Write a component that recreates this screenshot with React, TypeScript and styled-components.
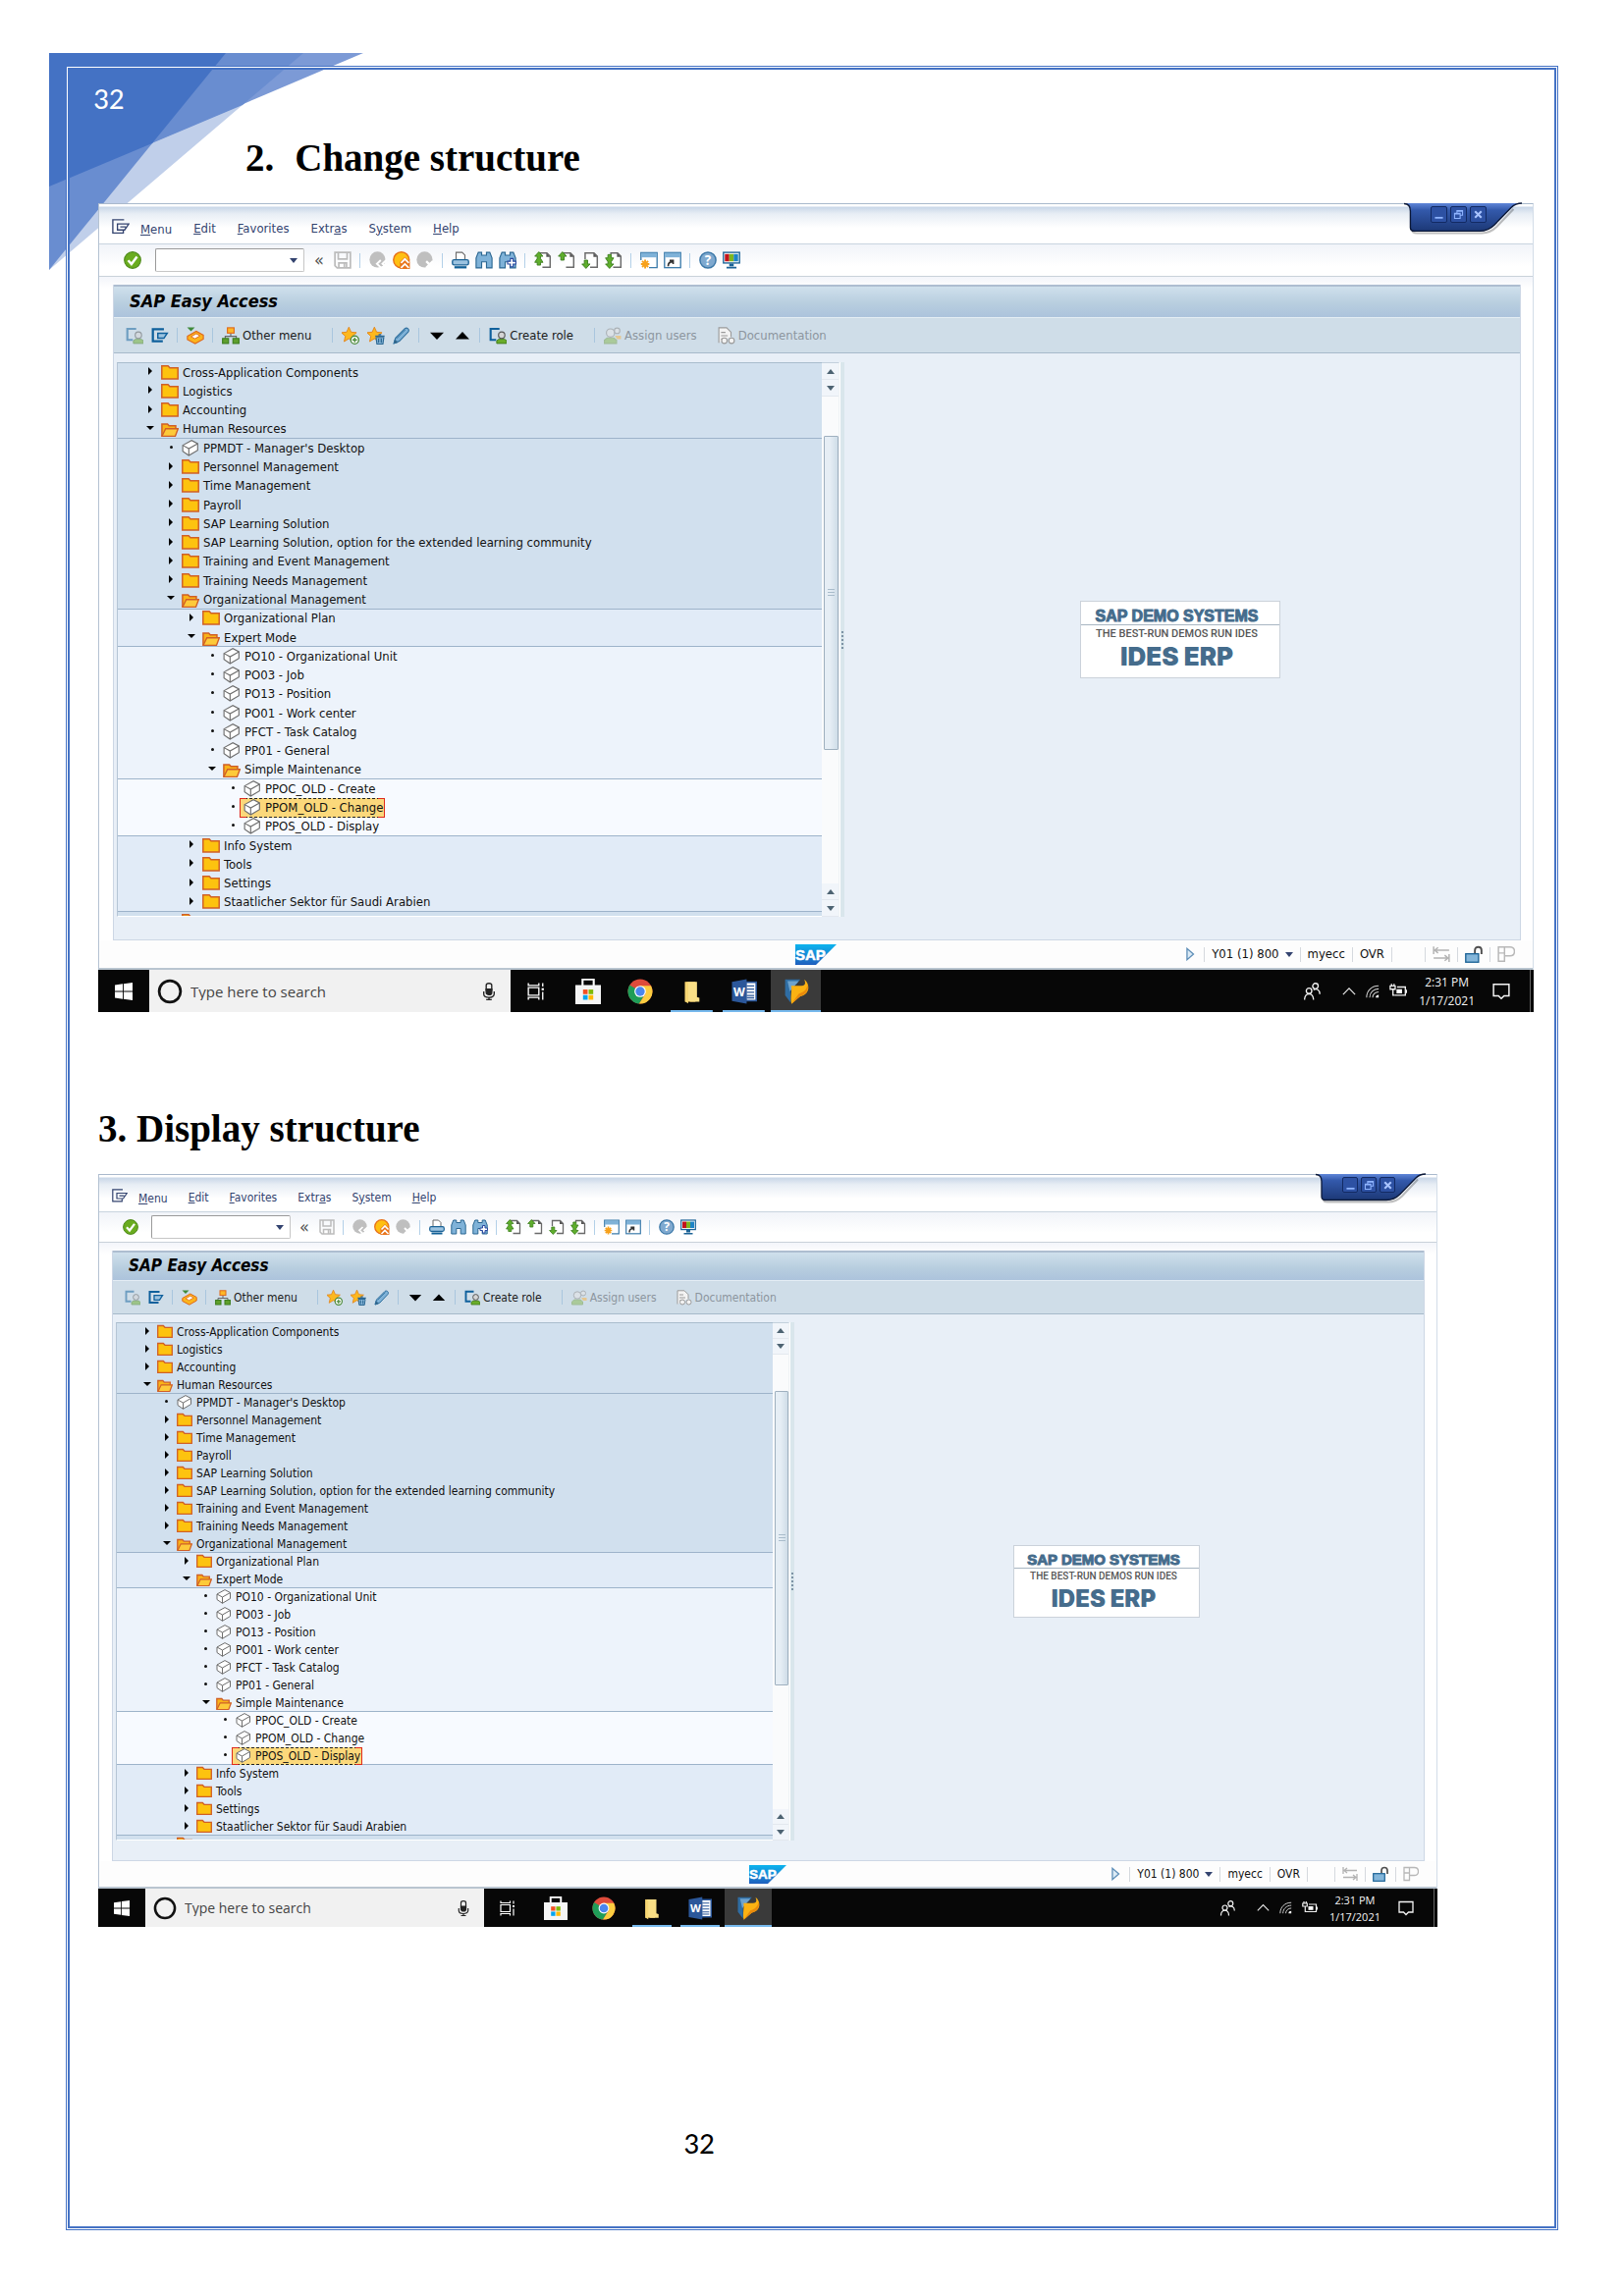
import React, { useId } from 'react';
import styled, { createGlobalStyle, css, ThemeProvider } from 'styled-components';

/* ------------------------------------------------------------------ */
/* Metrics: the same window is shown at two zoom levels                */
/* ------------------------------------------------------------------ */

interface Metrics {
  font: number;
  titleFont: number;
  taskFont: number;
  clockFont: number;
  icon: number;
  menuHeight: number;
  menuPad: number;
  menuGap: number;
  barHeight: number;
  barPad: number;
  titleHeight: number;
  appBarHeight: number;
  commandWidth: number;
  commandGap: number;
  sepWidth: number;
  buttonPad: number;
  bodySide: number;
  bodyPad: number;
  bodyEnd: number;
  treeRows: number;
  treeInset: number;
  indent: number;
  toggle: number;
  treeWidth: number;
  scroll: number;
  scrollButton: number;
  thumbTop: number;
  thumb: number;
  logoWidth: number;
  logoHeight: number;
  logoPad: number;
  logoHead: number;
  logoLine: number;
  logoName: number;
  statusHeight: number;
  statusGap: number;
  sapLogo: number;
  taskHeight: number;
  start: number;
  search: number;
  task: number;
  taskGap: number;
  taskIcon: number;
  tab: number;
  tabHeight: number;
  tabButton: number;
  edge: number;
}

declare module 'styled-components' {
  export interface DefaultTheme extends Metrics {}
}

const large: Metrics = {
  font: 13,
  titleFont: 18,
  taskFont: 15,
  clockFont: 12,
  icon: 18,
  menuHeight: 41,
  menuPad: 9,
  menuGap: 22,
  barHeight: 33,
  barPad: 25,
  titleHeight: 34,
  appBarHeight: 36,
  commandWidth: 152,
  commandGap: 8,
  sepWidth: 6,
  buttonPad: 13,
  bodySide: 14,
  bodyPad: 9,
  bodyEnd: 23,
  treeRows: 559,
  treeInset: 26,
  indent: 21,
  toggle: 14,
  treeWidth: 718,
  scroll: 18,
  scrollButton: 17,
  thumbTop: 40,
  thumb: 320,
  logoWidth: 204,
  logoHeight: 79,
  logoPad: 6,
  logoHead: 16,
  logoLine: 11,
  logoName: 26,
  statusHeight: 30,
  statusGap: 26,
  sapLogo: 42,
  taskHeight: 43,
  start: 52,
  search: 368,
  task: 51,
  taskGap: 2,
  taskIcon: 26,
  tab: 120,
  tabHeight: 30,
  tabButton: 17,
  edge: 14,
};

const regular: Metrics = {
  font: 12,
  titleFont: 17,
  taskFont: 14,
  clockFont: 11,
  icon: 16,
  menuHeight: 38,
  menuPad: 8,
  menuGap: 21,
  barHeight: 31,
  barPad: 24,
  titleHeight: 31,
  appBarHeight: 34,
  commandWidth: 142,
  commandGap: 7,
  sepWidth: 6,
  buttonPad: 12,
  bodySide: 13,
  bodyPad: 8,
  bodyEnd: 20,
  treeRows: 522,
  treeInset: 24,
  indent: 20,
  toggle: 13,
  treeWidth: 669,
  scroll: 17,
  scrollButton: 16,
  thumbTop: 37,
  thumb: 300,
  logoWidth: 190,
  logoHeight: 74,
  logoPad: 5,
  logoHead: 15,
  logoLine: 10,
  logoName: 24,
  statusHeight: 28,
  statusGap: 20,
  sapLogo: 38,
  taskHeight: 39,
  start: 48,
  search: 345,
  task: 48,
  taskGap: 1,
  taskIcon: 24,
  tab: 112,
  tabHeight: 28,
  tabButton: 16,
  edge: 13,
};

/* ------------------------------------------------------------------ */
/* Icons                                                               */
/* ------------------------------------------------------------------ */

const Svg = styled.svg<{ $size?: number }>`
  display: block;
  flex: none;
  width: ${(p) => p.$size ?? p.theme.icon}px;
  height: ${(p) => p.$size ?? p.theme.icon}px;
`;

const star = 'M6.5 .2l2 4.500 4.900.5-3.700 3.200 1.100 4.900-4.300-2.600-4.300 2.600 1.100-4.900L-.3 5.200l4.800-.5z';
const binoculars = 'M.8 15V6l2-5h3v2.500h4.400V1h3l2 5v9h-5V9.500H5.800V15z';
const page = 'M5.500 3V1.500h6l3 3v10h-7';

const icons = {
  exit: (
    <g fill="none" stroke="#33436f" strokeWidth="1.200">
      <path d="M11 .8H.8v12h9.500v-2.500" />
      <path d="M5 4.500h10.300l-3.800 5.500H5zM7.500 7.200h5" />
    </g>
  ),
  exitBlue: (
    <g fill="none" stroke="#0f609c" strokeWidth="2">
      <path d="M11.500 2H1.500v11h9" />
      <path d="M6 5.700h8.500l-3 4.600H6z" fill="#9cc3e0" strokeWidth="1.300" />
    </g>
  ),
  check: (
    <g>
      <circle cx="8" cy="8" r="7.400" fill="#6aac1f" stroke="#4f8a1c" />
      <path d="M4 8.200l3 3.300 5-6.700" fill="none" stroke="#fff" strokeWidth="2.200" />
    </g>
  ),
  save: (
    <g fill="none" stroke="#bcbcbc" strokeWidth="1.500">
      <path d="M1 1h14v14H3l-2-2z" />
      <path d="M4 1v6h8V1M4.500 15v-4.500h7V15M9.500 11v4" />
    </g>
  ),
  back: (
    <g>
      <circle cx="7.500" cy="7.500" r="7.200" fill="#bfbfbf" />
      <path d="M10.500 8L7 11.300l3.500 3.300M15.500 8L12 11.300l3.500 3.300" fill="none" stroke="#fff" strokeWidth="1.700" />
    </g>
  ),
  up: (
    <g>
      <circle cx="7.800" cy="7.800" r="7.100" fill="#ffc012" stroke="#e8731a" strokeWidth="1.300" />
      <path d="M6.500 9.500L11 5l4.500 4.500V16h-9z" fill="#e8731a" />
      <path d="M7.500 10.500L11 7l3.500 3.500M7.500 15L11 11.500l3.500 3.500" fill="none" stroke="#fff" strokeWidth="1.600" />
    </g>
  ),
  cancel: (
    <g>
      <circle cx="7.500" cy="7.500" r="7.200" fill="#bfbfbf" />
      <path d="M9 9l6 6M15 9l-6 6" stroke="#fff" strokeWidth="2" />
    </g>
  ),
  print: (
    <g>
      <path d="M4 8V1h5.500l2.500 2.500V8" fill="#fff" stroke="#6b6b6b" />
      <rect x=".7" y="7.700" width="14.600" height="4.600" rx="1.500" fill="#9cc3e0" stroke="#1c6396" strokeWidth="1.200" />
      <rect x="2.500" y="13.500" width="11" height="2" fill="#0f5f96" />
    </g>
  ),
  find: <path d={binoculars} fill="#7fb2d8" stroke="#2b6792" />,
  findNext: (
    <g>
      <path d={binoculars} fill="#7fb2d8" stroke="#2b6792" />
      <path d="M10.500 6.500h2.500v2.500h2.500v2.500H13V14h-2.500v-2.500H8V9h2.500z" fill="#fff" stroke="#2a49a0" />
    </g>
  ),
  firstPage: (
    <g>
      <path d={page} fill="#fff" stroke="#6a6a6a" strokeWidth="1.300" />
      <path d="M11 1.500v3.500h3.500z" fill="#555" />
      <path d="M4.300.5L8 4.500H5.800v2L8 10H5.800v2.500h-3V10H.6l2.200-3.500v-2H.6z" fill="#5fae2c" stroke="#3b7d1d" strokeWidth=".800" />
    </g>
  ),
  prevPage: (
    <g>
      <path d={page} fill="#fff" stroke="#6a6a6a" strokeWidth="1.300" />
      <path d="M11 1.500v3.500h3.500z" fill="#555" />
      <path d="M4.300.5L8 4.500H5.800V8H2.800V4.500H.6z" fill="#5fae2c" stroke="#3b7d1d" strokeWidth=".800" />
    </g>
  ),
  nextPage: (
    <g>
      <path d="M3.500 7V1.500h8l3 3v10H8" fill="#fff" stroke="#6a6a6a" strokeWidth="1.300" />
      <path d="M11 1.500v3.500h3.500z" fill="#555" />
      <path d="M4.300 15.500L8 11.500H5.800V8H2.800v3.500H.6z" fill="#5fae2c" stroke="#3b7d1d" strokeWidth=".800" />
    </g>
  ),
  lastPage: (
    <g>
      <path d={page} fill="#fff" stroke="#6a6a6a" strokeWidth="1.300" />
      <path d="M11 1.500v3.500h3.500z" fill="#555" />
      <path d="M4.300 15.500L8 11.500H5.800v-2L8 6H5.800V3h-3v3H.6l2.200 3.500v2H.6z" fill="#5fae2c" stroke="#3b7d1d" strokeWidth=".800" />
    </g>
  ),
  newSession: (
    <g>
      <path d="M.7 8V1.200h14.600v13.600H8" fill="#fff" stroke="#3d7cab" strokeWidth="1.200" />
      <rect x="1" y="1.500" width="14" height="4" fill="#7fb2d8" />
      <path d="M4.500 7.500v8M.7 11.500h7.600M1.800 8.800l5.400 5.400M7.200 8.800l-5.400 5.400" stroke="#f7a11b" strokeWidth="1.700" />
    </g>
  ),
  shortcut: (
    <g>
      <rect x=".7" y="1.200" width="14.600" height="13.600" fill="#fff" stroke="#3d7cab" strokeWidth="1.200" />
      <rect x="1" y="1.500" width="14" height="4" fill="#7fb2d8" />
      <path d="M4 13.500c0-3 1.500-4 4-4M5.300 8.200h3.200v3.300" fill="none" stroke="#333" strokeWidth="1.500" />
    </g>
  ),
  help: (
    <g>
      <circle cx="8" cy="8" r="7.200" fill="#7fa9cf" stroke="#3c78a8" strokeWidth="1.300" />
      <text x="8" y="12.200" textAnchor="middle" fontSize="12" fontWeight="700" fill="#fff" fontFamily="Open Sans, sans-serif">?</text>
    </g>
  ),
  layout: (
    <g>
      <rect x=".7" y="1" width="14.600" height="9.600" fill="#fff" stroke="#1c6396" strokeWidth="1.200" />
      <path d="M2 2.500h4v6.600H2z" fill="#c4131b" />
      <path d="M6 2.500h4v6.600H6z" fill="#7fb51f" />
      <path d="M10 2.500h4v6.600h-4z" fill="#1d84c6" />
      <path d="M6 11h4v2.500H6zM3.500 14h9v1.500h-9z" fill="#1c6396" />
    </g>
  ),
  role: (
    <g>
      <path d="M9.500 1.800H1.500v10h5" fill="none" stroke="#0f609c" strokeWidth="1.900" />
      <path d="M7 15v-2.500l2-1.500h5l2 1.500V15z" fill="#6aac2a" stroke="#3f7a1e" strokeWidth=".800" />
      <circle cx="11.500" cy="7.500" r="2.900" fill="#d5d5d5" stroke="#555" />
    </g>
  ),
  userMenu: (
    <g>
      <path d="M.5.500h7L4 4z" fill="#3f8a3a" />
      <path d="M.8 8.500l8-4.500 6.400 3.500v3.500l-7.400 4.200-7-3.700z" fill="#fbb51c" stroke="#e0691a" />
      <path d="M4 8.800l4.800-2.600 3.400 1.900-4.600 2.600z" fill="#fff" stroke="#e0691a" strokeWidth=".800" />
    </g>
  ),
  hierarchy: (
    <g>
      <path d="M8 6v3M3 11V8.500h10V11" fill="none" stroke="#666" />
      <rect x="5" y=".8" width="6" height="4.800" fill="#fdb827" stroke="#e0691a" />
      <rect x=".6" y="10.500" width="5.400" height="4.500" fill="#5f9f2d" stroke="#3b7d1d" />
      <rect x="10" y="10.500" width="5.400" height="4.500" fill="#5f9f2d" stroke="#3b7d1d" />
    </g>
  ),
  starAdd: (
    <g>
      <path d={star} fill="#fdb81e" stroke="#e2831b" strokeWidth=".800" />
      <circle cx="11.800" cy="11.800" r="3.600" fill="#fff" stroke="#4b8a3b" strokeWidth="1.200" />
      <path d="M11.800 9.700v4.200M9.700 11.800h4.200" stroke="#4b8a3b" strokeWidth="1.200" />
    </g>
  ),
  starDelete: (
    <g>
      <path d={star} fill="#fdb81e" stroke="#e2831b" strokeWidth=".800" />
      <path d="M8 9.500h7l-.8 6H8.800z" fill="#8fbcdd" stroke="#2b6792" />
      <path d="M7.300 8.300h8.400M10.300 7h2.400M10.300 10.500v4M12.700 10.500v4" stroke="#2b6792" strokeWidth="1.200" />
    </g>
  ),
  pencil: (
    <g>
      <path d="M1 15l1.500-5L11 1.500c2-1.500 4.500 1 3 3L6 13z" fill="#7fb2d8" stroke="#2f6f9d" />
      <path d="M3.500 10.500l8-8M1 15l1-3.500L4.500 14z" stroke="#2f6f9d" strokeWidth=".800" fill="#35607f" />
    </g>
  ),
  down: <path d="M1.800 5h12.400L8 11.500z" fill="#000" />,
  upArrow: <path d="M1.800 11h12.400L8 4.500z" fill="#000" />,
  users: (
    <g opacity=".55">
      <path d="M.5 15v-3l2.500-2h6l2.500 2v3z" fill="#8dbb5c" stroke="#7da35a" />
      <circle cx="6" cy="5.500" r="3.700" fill="#e6e6e6" stroke="#8e8e8e" />
      <circle cx="12" cy="3.500" r="2.500" fill="#e6e6e6" stroke="#8e8e8e" />
      <path d="M10 8h5.500v3H12z" fill="#f7b64a" />
    </g>
  ),
  document: (
    <g fill="#f3f3f3" stroke="#9a9a9a">
      <path d="M1 14.500V.8h7l4 4V9" />
      <path d="M3 5h4M3 8h6M3 11h2" />
      <circle cx="6" cy="12.500" r="2.500" />
      <circle cx="12.500" cy="12.500" r="2.500" />
    </g>
  ),
  folder: <path d="M.7 13.300V1.500h5.600l1.700 1.800h7.300v10z" fill="#fdc30f" stroke="#d05f27" strokeWidth="1.300" />,
  folderOpen: (
    <g>
      <path d="M.8 14.500V3.500h5l1.500 1.700h6v3" fill="#f9b318" stroke="#d05f27" strokeWidth="1.300" />
      <path d="M.9 14.500l3.300-6.700h11.200l-2.500 6.700z" fill="#fdca3a" stroke="#d05f27" strokeWidth="1.200" />
    </g>
  ),
  transaction: (
    <g fill="#fff" stroke="#6d6d6d" strokeWidth="1">
      <path d="M1 5L9 .6l5.500 2.900V9.500L6.500 14.300 1 10.500z" />
      <path d="M1 5l5.500 3 8-4.500M6.500 8v6.300" fill="none" />
    </g>
  ),
  send: <path d="M4.500 1.500v13L12 8z" fill="#dcebf6" stroke="#5f8fb8" strokeWidth="1.500" />,
  tabs: (
    <g fill="none" stroke="#b3b3b3" strokeWidth="1.300">
      <path d="M1 1v7M1.500 4.500H15M5 2L2 4.500 5 7M15 8v7M1 11.500h13.500M11 9l3 2.500-3 2.500" />
    </g>
  ),
  lock: (
    <g>
      <path d="M9 7.500V4.500c0-4 6-4 6 0V8" fill="none" stroke="#4f4f4f" strokeWidth="1.700" />
      <rect x=".7" y="7.700" width="11.600" height="7.600" fill="#84b6da" stroke="#1c6396" strokeWidth="1.200" />
    </g>
  ),
  performance: (
    <path d="M1 1.500h10.500q4 0 4 4t-4 4H6.500v5H1zM1 7h5.500V1.500M6.500 7v2.500" fill="none" stroke="#b8b8b8" strokeWidth="1.300" />
  ),
  windows: (
    <path d="M0 2.200l7.200-1v6.400H0zM8 1.100L16 0v7.600H8zM0 8.400h7.200v6.400L0 13.800zM8 8.400h8V16l-8-1.100z" fill="#fff" />
  ),
  cortana: <circle cx="8" cy="8" r="6.700" fill="none" stroke="#111" strokeWidth="1.700" />,
  mic: (
    <g fill="none" stroke="#222" strokeWidth="1.200">
      <path d="M5.500 7.500V2.500c0-2.400 5-2.400 5 0v5" />
      <path d="M5.500 6h5v3c0 2.600-5 2.600-5 0z" fill="#222" />
      <path d="M3.300 8v2.500c0 4 9.400 4 9.400 0V8M8 13.500v2M5.500 15.500h5" />
    </g>
  ),
  taskView: (
    <g fill="none" stroke="#fff" strokeWidth="1.200">
      <path d="M1 4.500h9.500v7H1zM1 .5v2h9.500v-2M1 15.500v-2h9.500v2M14 .5v3M14 8.500v7" />
      <path d="M13 5h2v2h-2z" fill="#fff" stroke="none" />
    </g>
  ),
  store: (
    <g>
      <path d="M4.500 4.500v-4h7v4" fill="none" stroke="#fff" strokeWidth="1.300" />
      <path d="M0 4h16v12H0z" fill="#f5f5f5" />
      <path d="M4.800 6.800h2.900v2.900H4.800z" fill="#f25022" />
      <path d="M8.300 6.800h2.900v2.900H8.300z" fill="#7fba00" />
      <path d="M4.800 10.300h2.900v2.900H4.800z" fill="#00a4ef" />
      <path d="M8.300 10.300h2.900v2.900H8.300z" fill="#ffb900" />
    </g>
  ),
  chrome: (
    <g>
      <circle cx="8" cy="8" r="7.700" fill="#de4b3b" />
      <path d="M1.400 4a7.700 7.700 0 0 0 6 11.700l3.500-6z" fill="#1f9d58" />
      <path d="M7.400 15.700A7.700 7.700 0 0 0 14.800 4.500H8l3.300 5z" fill="#fccd40" />
      <circle cx="8" cy="8" r="3.600" fill="#fff" />
      <circle cx="8" cy="8" r="2.900" fill="#4a86ee" />
    </g>
  ),
  explorer: (
    <g>
      <path d="M3.500 2h6.500v12.500H3.500z" fill="#e8b954" />
      <path d="M4.500 2H11v9.500l1.500.5v2.500H7l-2.500-1z" fill="#fadf86" />
      <path d="M3.500 2l2 .8V15.500l-2-1.200z" fill="#f7d774" />
    </g>
  ),
  word: (
    <g>
      <path d="M9 2.200h6.500v11.600H9z" fill="#fff" stroke="#2b579a" />
      <path d="M9.500 4.500h4.700M9.500 6.500h4.700M9.500 8.500h4.700M9.500 10.500h4.700M9.500 12h4.700" stroke="#2b579a" strokeWidth=".800" />
      <path d="M.3 2L9.500.3v15.400L.3 14z" fill="#2b579a" />
      <text x="4.900" y="10.800" textAnchor="middle" fontSize="7.500" fontWeight="700" fill="#fff" fontFamily="Open Sans, sans-serif">W</text>
    </g>
  ),
  sapGui: (
    <g>
      <path d="M1 .5h9.500L8 3.500H4.500V15L1 10.500z" fill="#2f6da3" />
      <path d="M2.500 1.500h7L4 8z" fill="#6ea2cc" />
      <path d="M4.800 4.500h6.500C14 4.500 13.800 2.500 13 .5c4 3 3.500 9.500-2.500 10.500L5 15.800C4 12 5.500 7.500 4.800 4.500z" fill="#fbb212" />
      <path d="M5 15.800l5.500-4.800c4-1 5.200-4 4.700-7.500-.7 3.500-2.700 5-5.700 6z" fill="#e98a0c" />
    </g>
  ),
  people: (
    <g fill="none" stroke="#f2f2f2" strokeWidth="1.200">
      <circle cx="5.500" cy="7.500" r="2.500" />
      <path d="M1.500 15.500c0-7 8-7 8 0" />
      <circle cx="11.300" cy="3.200" r="2.500" />
      <path d="M9.500 6.500c3-1.500 5.800 0 5.800 4" />
    </g>
  ),
  caret: <path d="M1 11.500l7-7 7 7" fill="none" stroke="#e8e8e8" strokeWidth="1.400" />,
  wifi: (
    <g fill="none" stroke="#cfcfcf" strokeWidth="1.200">
      <path d="M1 15C1 7 7 1.500 15 1.500M4.500 15C4.500 9.500 9 5 15 5M8 15c0-3.500 3-6.500 7-6.500" />
      <path d="M11.500 15c0-2 1.500-3 3.500-3v3z" fill="#fff" stroke="none" />
    </g>
  ),
  battery: (
    <g fill="none" stroke="#f0f0f0" strokeWidth="1.200">
      <path d="M7 4h7.500v7.500H5M15.500 6.500v3" />
      <path d="M.8 3h4.500v3H.8zM2 1v2M4.300 1v2M3.300 6v5.500H5" />
      <path d="M6.500 6h5v3.800h-5z" fill="#fff" stroke="none" />
    </g>
  ),
  notice: <path d="M1 1.500h14v10.500h-4.500L8 14.500 5.500 12H1z" fill="none" stroke="#f5f5f5" strokeWidth="1.300" />,
  minimize: <path d="M3 11h10v2.200H3z" fill="#8fb4ff" />,
  restore: (
    <path d="M6 6V3h7v6h-3M3 6.500h7v6.500H3zM3 7.500h7M6 4h7" fill="none" stroke="#8fb4ff" strokeWidth="1.300" />
  ),
  close: <path d="M4 4l8 8M12 4l-8 8" stroke="#a9c4ff" strokeWidth="2.600" />,
};

type IconName = keyof typeof icons;

const Icon = ({ name, size }: { name: IconName; size?: number }) => (
  <Svg viewBox="0 0 16 16" $size={size} aria-hidden="true">
    {icons[name]}
  </Svg>
);

/* ------------------------------------------------------------------ */
/* Page                                                                */
/* ------------------------------------------------------------------ */

const GlobalStyle = createGlobalStyle`
  *, *::before, *::after { box-sizing: border-box; }
  body { margin: 0; background: #fff; }
  button, input { font: inherit; color: inherit; }
`;

const Page = styled.div`
  position: relative;
  display: flex;
  min-height: 100vh;
  padding: 67px;
`;

const CornerArt = styled.svg`
  position: absolute;
  left: 50px;
  top: 54px;
  width: 320px;
  height: 222px;
`;

const Frame = styled.main`
  position: relative;
  flex: 1;
  min-width: 0;
  padding: 15px 24px 60px 32px;
  border: 1px solid #4472c4;
  box-shadow: inset 0 0 0 1px #fff, inset 0 0 0 3px #4472c4;
`;

const pageNumber = css`
  font: 400 31px/34px Carlito, Lato, sans-serif;
`;

const PageHeader = styled.header`
  ${pageNumber}
  margin-left: -5px;
  color: #fff;
`;

const PageFooter = styled.footer`
  ${pageNumber}
  margin-top: 203px;
  padding-right: 238px;
  text-align: center;
  color: #000;
`;

const Heading = styled.h2<{ $numbered?: boolean }>`
  display: flex;
  gap: ${(p) => (p.$numbered ? 21 : 0)}px;
  margin: ${(p) => (p.$numbered ? '21px 0 23px 150px' : '96px 0 23px')};
  font: 700 39px/46px 'Liberation Serif', 'Times New Roman', serif;
  color: #000;
`;

/* ------------------------------------------------------------------ */
/* SAP window                                                          */
/* ------------------------------------------------------------------ */

const Shot = styled.section<{ $inset?: number }>`
  margin-right: ${(p) => p.$inset ?? 0}px;
  font: 400 ${(p) => p.theme.font}px/${(p) => p.theme.icon}px 'DejaVu Sans Condensed', Tahoma, 'Noto Sans', sans-serif;
  color: #111;
  white-space: nowrap;
`;

const Window = styled.div`
  position: relative;
  border-top: 1px solid #a9b9cc;
  border-left: 1px solid #b4c2d2;
  border-right: 1px solid #d3dde8;
  background: #fff;
`;

const PlainButton = styled.button`
  display: flex;
  align-items: center;
  padding: 0;
  border: 0;
  background: none;
  text-align: left;
`;

const MenuBar = styled.nav`
  display: flex;
  align-items: center;
  gap: ${(p) => p.theme.menuGap}px;
  height: ${(p) => p.theme.menuHeight}px;
  padding: ${(p) => p.theme.menuPad}px 13px 0;
  border-bottom: 1px solid #c9d4df;
  background: linear-gradient(#fff 0 2px, #c9d7e8 3px, #e8eef5 10px, #fff 24px);
  color: #33436f;
`;

const MenuItem = styled(PlainButton)`
  display: inline;
`;

const MenuLead = styled(MenuItem)`
  display: flex;
  align-items: flex-end;
  gap: 11px;

  svg {
    margin-bottom: 2px;
  }
`;

const Toolbar = styled.div`
  display: flex;
  align-items: center;
  gap: 6px;
  height: ${(p) => p.theme.barHeight}px;
  padding-left: ${(p) => p.theme.barPad}px;
  border-bottom: 1px solid #c9d1d9;
  background: linear-gradient(#f1f4f9, #fff 70%);
`;

const ToolSep = styled.span`
  width: ${(p) => p.theme.sepWidth}px;
  height: 15px;
  background: linear-gradient(#b3d0e8, #b3d0e8) center / 1px 100% no-repeat;
`;

const Command = styled.div`
  display: flex;
  align-items: center;
  width: ${(p) => p.theme.commandWidth}px;
  height: 24px;
  margin: 0 ${(p) => p.theme.commandGap - 4}px 0 ${(p) => p.theme.commandGap}px;
  padding-right: 6px;
  border: 1px solid #9a9a9a;
  border-right-color: #c6c6c6;
  border-bottom-color: #c6c6c6;
  border-radius: 2px;
  background: #fff;
`;

const CommandInput = styled.input`
  flex: 1;
  min-width: 0;
  height: 20px;
  padding: 0 4px;
  border: 0;
  outline: 0;
  background: none;
`;

const Arrow = styled.span<{ $up?: boolean; $color?: string }>`
  display: block;
  border: solid transparent;
  border-width: ${(p) => (p.$up ? '0 4px 5px' : '5px 4px 0')};
  border-${(p) => (p.$up ? 'bottom' : 'top')}-color: ${(p) => p.$color ?? '#33436f'};
`;

const Collapse = styled(PlainButton)`
  margin-right: 4px;
  color: #555;
  font-size: 18px;
`;

const TabBox = styled.div`
  position: absolute;
  top: -1px;
  right: 11px;
  width: ${(p) => p.theme.tab}px;
  height: ${(p) => p.theme.tabHeight}px;
  padding: 3px 0 0 27px;
`;

const TabShape = styled.svg`
  position: absolute;
  inset: 0;
  width: 100%;
  height: 100%;
  overflow: visible;
`;

const TabButtons = styled.div`
  position: relative;
  display: flex;
  gap: 3px;
`;

const TabButton = styled(PlainButton)`
  justify-content: center;
  width: ${(p) => p.theme.tabButton}px;
  height: ${(p) => p.theme.tabButton}px;
  border: 1px solid #122a63;
  border-radius: 2px;
  background: #2d51a3;
`;

const Body = styled.div`
  padding: 8px 12px 0 ${(p) => p.theme.bodySide}px;
  background: linear-gradient(#f3f5fa, #fff 12px);
`;

const Panel = styled.div`
  border: 1px solid #cdd7e5;
  border-top: 0;
  background: #e8eff7;
`;

const TitleBar = styled.h3`
  height: ${(p) => p.theme.titleHeight}px;
  margin: 0;
  padding: 0 16px;
  border-top: 2px solid #adbdd0;
  border-bottom: 1px solid #e4edf4;
  background: linear-gradient(#cfe0ec, #b8cedf 55%, #acc3dc);
  font: italic 700 ${(p) => p.theme.titleFont}px/${(p) => p.theme.titleHeight - 5}px 'DejaVu Sans Condensed', Tahoma, sans-serif;
  color: #000;
`;

const AppBar = styled.div`
  display: flex;
  align-items: center;
  gap: 8px;
  height: ${(p) => p.theme.appBarHeight}px;
  padding: 0 12px;
  border-bottom: 1px solid #a6b9ca;
  background: #cfdde8;
`;

const AppSep = styled.span`
  width: 2px;
  height: 15px;
  border-left: 1px solid #a9c6de;
`;

const AppButton = styled(PlainButton)<{ $faded?: boolean }>`
  gap: 3px;
  opacity: ${(p) => (p.$faded ? 0.5 : 1)};
`;

const LabelButton = styled(AppButton)`
  padding-right: ${(p) => p.theme.buttonPad}px;
  color: #1a1a1a;

  &:disabled {
    color: #8c959e;
  }
`;

const Split = styled.div`
  display: flex;
  padding: ${(p) => p.theme.bodyPad}px 0 ${(p) => p.theme.bodyEnd}px 3px;
`;

/* ---- tree ---- */

const shades = ['#d1e0ee', '#d1e0ee', '#e1ebf7', '#edf3fb', '#f7faff'];

const TreePane = styled.div`
  width: ${(p) => p.theme.treeWidth}px;
  border-top: 1px solid #a9bccd;
  border-left: 1px solid #b5c5d5;
  border-bottom: 1px solid #fff;
`;

const Tree = styled.ul`
  display: grid;
  grid-auto-rows: 1fr;
  height: ${(p) => p.theme.treeRows}px;
  margin: 0;
  padding: 0;
  list-style: none;
`;

const Row = styled.li<{ $level: number; $line?: boolean }>`
  display: flex;
  align-items: center;
  min-height: 0;
  padding-left: ${(p) => p.theme.treeInset + p.$level * p.theme.indent}px;
  background: ${(p) => shades[p.$level]};
  box-shadow: ${(p) => (p.$line ? 'inset 0 -1px #9db3ca' : 'none')};
`;

const NextRow = styled.div`
  height: 4px;
  padding: 1px 0 0 ${(p) => p.theme.treeInset + p.theme.indent + p.theme.toggle + 4}px;
  overflow: hidden;
  background: #d1e0ee;
`;

const Toggle = styled.span<{ $kind: 'closed' | 'open' | 'leaf' }>`
  display: flex;
  align-items: center;
  justify-content: center;
  width: ${(p) => p.theme.toggle}px;
  height: 100%;
  padding-bottom: 3px;

  &::before {
    content: '';
    ${(p) =>
      p.$kind === 'leaf'
        ? 'width: 3px; height: 3px; border-radius: 2px; background: #111;'
        : p.$kind === 'open'
          ? 'border: solid transparent; border-width: 4px 4px 0; border-top-color: #000;'
          : 'border: solid transparent; border-width: 4px 0 4px 4px; border-left-color: #000;'}
  }
`;

const Node = styled(PlainButton)<{ $selected?: boolean }>`
  position: relative;
  gap: 4px;
  height: 100%;
  padding: 0 1px 0 3px;
  border: 1px solid transparent;

  ${(p) =>
    p.$selected &&
    css`
      border: 1px dashed #222;
      background: #fbd87b;

      &::before,
      &::after {
        content: '';
        position: absolute;
        top: -1px;
        bottom: -1px;
        width: 7px;
        border: 1px solid #e02a1c;
      }
      &::before {
        left: -1px;
        border-right: 0;
      }
      &::after {
        right: -1px;
        border-left: 0;
      }
    `}
`;

const Scroll = styled.div`
  display: flex;
  flex-direction: column;
  width: ${(p) => p.theme.scroll}px;
  border-top: 1px solid #c3d0dc;
  border-right: 1px solid #eef2f5;
  background: #fafbfc;
`;

const ScrollButton = styled(PlainButton)`
  flex: none;
  justify-content: center;
  height: ${(p) => p.theme.scrollButton}px;
  border-bottom: 1px solid #e3e8ee;
  background: #f1f5fa;
`;

const Track = styled.div`
  flex: 1;
  padding: ${(p) => p.theme.thumbTop}px 0 0 2px;
`;

const Thumb = styled.div`
  display: grid;
  place-content: center;
  height: ${(p) => p.theme.thumb}px;
  border: 1px solid #9fb0bf;
  border-radius: 1px;
  background: linear-gradient(90deg, #e6eef5 40%, #cfdde8);
`;

const Grip = styled.span`
  width: 7px;
  height: 9px;
  background: repeating-linear-gradient(#a9bccb 0 1px, transparent 1px 3px);
`;

const Splitter = styled.div`
  display: grid;
  place-content: center;
  width: 5px;
  border-left: 1px solid #fff;
  background: #d9e6ec;
`;

const SplitterGrip = styled(Grip)`
  width: 2px;
  height: 18px;
  background: repeating-linear-gradient(#7d93a5 0 2px, transparent 2px 4px);
`;

const LogoPane = styled.div`
  display: grid;
  flex: 1;
  place-content: center;
  padding-right: 5px;
`;

const LogoCard = styled.div`
  display: flex;
  flex-direction: column;
  align-items: center;
  width: ${(p) => p.theme.logoWidth}px;
  height: ${(p) => p.theme.logoHeight}px;
  border: 1px solid #cbd2da;
  background: #fff;
  color: #456c8c;
`;

const LogoHead = styled.div`
  align-self: stretch;
  padding: ${(p) => p.theme.logoPad}px 6px 0 0;
  border-bottom: 1px solid #a8b6c2;
  font: 700 ${(p) => p.theme.logoHead}px/17px 'Liberation Sans', Arial, sans-serif;
  -webkit-text-stroke: 1px #456c8c;
  text-align: center;
`;

const LogoLine = styled.div`
  padding-right: 6px;
  font: 500 ${(p) => p.theme.logoLine}px/${(p) => p.theme.scrollButton}px Roboto, 'Liberation Sans', sans-serif;
  color: #555;
`;

const LogoName = styled.div`
  padding-right: 6px;
  font: 900 ${(p) => p.theme.logoName}px/30px Inter, 'Liberation Sans', sans-serif;
`;

/* ---- status bar ---- */

const StatusBar = styled.footer`
  display: grid;
  grid-template-columns: 1fr auto 1fr;
  align-items: center;
  height: ${(p) => p.theme.statusHeight}px;
  border-bottom: 2px solid #b9c5d0;
  background: #fdfdfd;
`;

const SapLogo = styled.svg`
  display: block;
  grid-column: 2;
  width: ${(p) => p.theme.sapLogo}px;
`;

const StatusItems = styled.div`
  display: flex;
  align-items: center;
  justify-content: flex-end;
  gap: 7px;
  padding-right: 18px;
`;

const StatusSep = styled.span<{ $wide?: boolean }>`
  width: 1px;
  height: 15px;
  margin-left: ${(p) => (p.$wide ? p.theme.statusGap : 0)}px;
  background: #d5d9de;
`;

const StatusButton = styled(PlainButton)`
  gap: 6px;
`;

/* ---- Windows task bar ---- */

const TaskBar = styled.div`
  display: flex;
  height: ${(p) => p.theme.taskHeight}px;
  background: #070707;
  font-family: 'Open Sans', 'Segoe UI', sans-serif;
  color: #f3f3f3;
`;

const StartButton = styled(PlainButton)`
  justify-content: center;
  width: ${(p) => p.theme.start}px;
`;

const SearchBox = styled.label`
  display: flex;
  align-items: center;
  gap: 8px;
  width: ${(p) => p.theme.search}px;
  padding: 0 13px 0 8px;
  background: #f1f1f1;
  color: #333;
`;

const SearchInput = styled.input`
  flex: 1;
  min-width: 0;
  padding: 0;
  border: 0;
  outline: 0;
  background: none;
  font-size: ${(p) => p.theme.taskFont}px;

  &::placeholder {
    color: #444;
    opacity: 1;
  }
`;

const Tasks = styled.div`
  display: flex;
  flex: 1;
  gap: ${(p) => p.theme.taskGap}px;
`;

const TaskButton = styled(PlainButton)<{ $open?: boolean; $active?: boolean }>`
  justify-content: center;
  width: ${(p) => p.theme.task}px;
  background: ${(p) =>
    p.$open
      ? `linear-gradient(#76b9ed, #76b9ed) bottom / ${p.$active ? 100 : 84}% 2px no-repeat`
      : 'none'};
  background-color: ${(p) => (p.$active ? '#3a3a3a' : 'transparent')};
`;

const Tray = styled.div`
  display: flex;
  align-items: center;
  gap: 10px;
  padding-right: 20px;
  border-right: 1px solid #666;
  margin-right: 3px;
`;

const TrayPeople = styled(PlainButton)`
  margin-right: 12px;
`;

const Clock = styled.time`
  padding: 0 8px 0 2px;
  font-size: ${(p) => p.theme.clockFont}px;
  line-height: ${(p) => p.theme.icon + 1}px;
  text-align: center;
`;

/* ------------------------------------------------------------------ */
/* Data                                                                */
/* ------------------------------------------------------------------ */

interface TreeItem {
  level: number;
  kind: 'closed' | 'open' | 'leaf';
  label: string;
  line?: boolean;
}

const item = (level: number, kind: TreeItem['kind'], label: string, line = false): TreeItem => ({
  level,
  kind,
  label,
  line,
});

const tree: TreeItem[] = [
  item(0, 'closed', 'Cross-Application Components'),
  item(0, 'closed', 'Logistics'),
  item(0, 'closed', 'Accounting'),
  item(0, 'open', 'Human Resources', true),
  item(1, 'leaf', "PPMDT - Manager's Desktop"),
  item(1, 'closed', 'Personnel Management'),
  item(1, 'closed', 'Time Management'),
  item(1, 'closed', 'Payroll'),
  item(1, 'closed', 'SAP Learning Solution'),
  item(1, 'closed', 'SAP Learning Solution, option for the extended learning community'),
  item(1, 'closed', 'Training and Event Management'),
  item(1, 'closed', 'Training Needs Management'),
  item(1, 'open', 'Organizational Management', true),
  item(2, 'closed', 'Organizational Plan'),
  item(2, 'open', 'Expert Mode', true),
  item(3, 'leaf', 'PO10 - Organizational Unit'),
  item(3, 'leaf', 'PO03 - Job'),
  item(3, 'leaf', 'PO13 - Position'),
  item(3, 'leaf', 'PO01 - Work center'),
  item(3, 'leaf', 'PFCT - Task Catalog'),
  item(3, 'leaf', 'PP01 - General'),
  item(3, 'open', 'Simple Maintenance', true),
  item(4, 'leaf', 'PPOC_OLD - Create'),
  item(4, 'leaf', 'PPOM_OLD - Change'),
  item(4, 'leaf', 'PPOS_OLD - Display', true),
  item(2, 'closed', 'Info System'),
  item(2, 'closed', 'Tools'),
  item(2, 'closed', 'Settings'),
  item(2, 'closed', 'Staatlicher Sektor für Saudi Arabien', true),
];

const nodeIcon: Record<TreeItem['kind'], IconName> = {
  closed: 'folder',
  open: 'folderOpen',
  leaf: 'transaction',
};

const toolGroups: { icon: IconName; label: string }[][] = [
  [{ icon: 'save', label: 'Save' }],
  [
    { icon: 'back', label: 'Back' },
    { icon: 'up', label: 'Exit' },
    { icon: 'cancel', label: 'Cancel' },
  ],
  [
    { icon: 'print', label: 'Print' },
    { icon: 'find', label: 'Find' },
    { icon: 'findNext', label: 'Find next' },
  ],
  [
    { icon: 'firstPage', label: 'First page' },
    { icon: 'prevPage', label: 'Previous page' },
    { icon: 'nextPage', label: 'Next page' },
    { icon: 'lastPage', label: 'Last page' },
  ],
  [
    { icon: 'newSession', label: 'New session' },
    { icon: 'shortcut', label: 'Create shortcut' },
  ],
  [
    { icon: 'help', label: 'Help' },
    { icon: 'layout', label: 'Customize layout' },
  ],
];

const tasks: { icon: IconName; label: string; open?: boolean; active?: boolean; small?: boolean }[] = [
  { icon: 'taskView', label: 'Task view', small: true },
  { icon: 'store', label: 'Store' },
  { icon: 'chrome', label: 'Chrome' },
  { icon: 'explorer', label: 'File explorer', open: true },
  { icon: 'word', label: 'Word', open: true },
  { icon: 'sapGui', label: 'SAP Logon', open: true, active: true },
];

/* ------------------------------------------------------------------ */
/* Components                                                          */
/* ------------------------------------------------------------------ */

const WindowTab = () => {
  const id = useId();
  return (
    <TabBox>
      <TabShape viewBox="0 0 112 28" preserveAspectRatio="none" aria-hidden="true">
        <defs>
          <linearGradient id={id} x1="0" y1="0" x2="0" y2="1">
            <stop offset="0" stopColor="#5f86d8" />
            <stop offset=".25" stopColor="#3359ab" />
            <stop offset="1" stopColor="#1c3876" />
          </linearGradient>
        </defs>
        <path d="M8 26q0 2.500 4 2.500h62q8 0 14-6l16-17" fill="none" stroke="#000" strokeOpacity=".25" strokeWidth="2" />
        <path d="M0 0q6 0 6 7v16q0 3.500 4 3.500h62q8 0 14-6L102 4q4-4 10-4z" fill={`url(#${id})`} />
        <path d="M0 .5q6 0 6 7V23q0 3.500 4 3.500h62q8 0 14-6L102 4q4-4 10-4" fill="none" stroke="#0b1838" strokeWidth="1.300" />
      </TabShape>
      <TabButtons>
        <TabButton type="button" aria-label="Minimize"><Icon name="minimize" size={13} /></TabButton>
        <TabButton type="button" aria-label="Restore"><Icon name="restore" size={13} /></TabButton>
        <TabButton type="button" aria-label="Close"><Icon name="close" size={13} /></TabButton>
      </TabButtons>
    </TabBox>
  );
};

const SapMark = () => {
  const id = useId();
  return (
    <SapLogo viewBox="0 0 42 21" role="img" aria-label="SAP">
      <defs>
        <linearGradient id={id} x1="0" y1="0" x2="0" y2="1">
          <stop offset="0" stopColor="#0cb4ee" />
          <stop offset="1" stopColor="#1f5fbe" />
        </linearGradient>
      </defs>
      <path d="M0 0h42L21 21H0z" fill={`url(#${id})`} />
      <text x="0" y="16" fontSize="15" fontWeight="700" fill="#fff" stroke="#fff" strokeWidth=".500" fontFamily="Liberation Sans, Arial, sans-serif">
        SAP
      </text>
    </SapLogo>
  );
};

const SapWindow = ({ selected }: { selected: string }) => {
  const command = useId();
  return (
    <Window>
      <MenuBar aria-label="Menu bar">
        <MenuLead type="button"><Icon name="exit" /><span><u>M</u>enu</span></MenuLead>
        <MenuItem type="button"><u>E</u>dit</MenuItem>
        <MenuItem type="button"><u>F</u>avorites</MenuItem>
        <MenuItem type="button">Extr<u>a</u>s</MenuItem>
        <MenuItem type="button">S<u>y</u>stem</MenuItem>
        <MenuItem type="button"><u>H</u>elp</MenuItem>
      </MenuBar>
      <WindowTab />
      <Toolbar>
        <PlainButton type="button" aria-label="Enter"><Icon name="check" /></PlainButton>
        <Command>
          <CommandInput id={command} aria-label="Command" />
          <PlainButton type="button" aria-label="Command history"><Arrow /></PlainButton>
        </Command>
        <Collapse type="button" aria-label="Hide command field">«</Collapse>
        {toolGroups.map((group, i) => (
          <React.Fragment key={group[0].icon}>
            {i > 0 && <ToolSep />}
            {group.map((tool) => (
              <PlainButton type="button" key={tool.icon} aria-label={tool.label}>
                <Icon name={tool.icon} />
              </PlainButton>
            ))}
          </React.Fragment>
        ))}
      </Toolbar>
      <Body>
        <Panel>
          <TitleBar>SAP Easy Access</TitleBar>
          <AppBar>
            <AppButton type="button" $faded aria-label="User role"><Icon name="role" /></AppButton>
            <AppButton type="button" aria-label="SAP menu"><Icon name="exitBlue" /></AppButton>
            <AppSep />
            <AppButton type="button" aria-label="Business workplace"><Icon name="userMenu" /></AppButton>
            <AppSep />
            <LabelButton type="button"><Icon name="hierarchy" />Other menu</LabelButton>
            <AppSep />
            <AppButton type="button" aria-label="Add to favorites"><Icon name="starAdd" /></AppButton>
            <AppButton type="button" aria-label="Delete favorite"><Icon name="starDelete" /></AppButton>
            <AppButton type="button" aria-label="Change favorite"><Icon name="pencil" /></AppButton>
            <AppSep />
            <AppButton type="button" aria-label="Move down"><Icon name="down" /></AppButton>
            <AppButton type="button" aria-label="Move up"><Icon name="upArrow" /></AppButton>
            <AppSep />
            <LabelButton type="button"><Icon name="role" />Create role</LabelButton>
            <AppSep />
            <LabelButton type="button" disabled><Icon name="users" />Assign users</LabelButton>
            <LabelButton type="button" disabled><Icon name="document" />Documentation</LabelButton>
          </AppBar>
          <Split>
            <TreePane>
              <Tree>
                {tree.map((node) => (
                  <Row key={node.label} $level={node.level} $line={node.line}>
                    <Toggle $kind={node.kind} />
                    <Node type="button" $selected={node.label === selected}>
                      <Icon name={nodeIcon[node.kind]} />
                      {node.label}
                    </Node>
                  </Row>
                ))}
              </Tree>
              <NextRow><Icon name="folder" /></NextRow>
            </TreePane>
            <Scroll>
              <ScrollButton type="button" aria-label="Scroll up"><Arrow $up $color="#4d6372" /></ScrollButton>
              <ScrollButton type="button" aria-label="Line down"><Arrow $color="#4d6372" /></ScrollButton>
              <Track><Thumb><Grip /></Thumb></Track>
              <ScrollButton type="button" aria-label="Line up"><Arrow $up $color="#4d6372" /></ScrollButton>
              <ScrollButton type="button" aria-label="Scroll down"><Arrow $color="#4d6372" /></ScrollButton>
            </Scroll>
            <Splitter><SplitterGrip /></Splitter>
            <LogoPane>
              <LogoCard>
                <LogoHead>SAP DEMO SYSTEMS</LogoHead>
                <LogoLine>THE BEST-RUN DEMOS RUN IDES</LogoLine>
                <LogoName>IDES ERP</LogoName>
              </LogoCard>
            </LogoPane>
          </Split>
        </Panel>
      </Body>
      <StatusBar>
        <SapMark />
        <StatusItems>
          <Icon name="send" size={14} />
          <StatusSep />
          <StatusButton type="button">Y01 (1) 800<Arrow /></StatusButton>
          <StatusSep />
          <span>myecc</span>
          <StatusSep />
          <span>OVR</span>
          <StatusSep />
          <StatusSep $wide />
          <StatusButton type="button" aria-label="Transfer"><Icon name="tabs" /></StatusButton>
          <StatusSep />
          <StatusButton type="button" aria-label="Unlocked"><Icon name="lock" /></StatusButton>
          <StatusSep />
          <StatusButton type="button" aria-label="Performance"><Icon name="performance" /></StatusButton>
        </StatusItems>
      </StatusBar>
    </Window>
  );
};

const WindowsTaskBar = ({ metrics }: { metrics: Metrics }) => {
  const search = useId();
  return (
    <TaskBar>
      <StartButton type="button" aria-label="Start"><Icon name="windows" size={metrics.icon} /></StartButton>
      <SearchBox htmlFor={search}>
        <Icon name="cortana" size={metrics.taskIcon} />
        <SearchInput id={search} placeholder="Type here to search" aria-label="Search" />
        <Icon name="mic" size={metrics.icon} />
      </SearchBox>
      <Tasks>
        {tasks.map((task) => (
          <TaskButton type="button" key={task.icon} aria-label={task.label} $open={task.open} $active={task.active}>
            <Icon name={task.icon} size={task.small ? metrics.icon : metrics.taskIcon} />
          </TaskButton>
        ))}
      </Tasks>
      <Tray>
        <TrayPeople type="button" aria-label="People"><Icon name="people" /></TrayPeople>
        <PlainButton type="button" aria-label="Show hidden icons"><Icon name="caret" size={metrics.edge} /></PlainButton>
        <Icon name="wifi" size={metrics.edge} />
        <Icon name="battery" />
        <Clock>2:31 PM<br />1/17/2021</Clock>
        <PlainButton type="button" aria-label="Notifications"><Icon name="notice" /></PlainButton>
      </Tray>
    </TaskBar>
  );
};

const Screen = ({ metrics, selected, inset }: { metrics: Metrics; selected: string; inset?: number }) => (
  <ThemeProvider theme={metrics}>
    <Shot $inset={inset}>
      <SapWindow selected={selected} />
      <WindowsTaskBar metrics={metrics} />
    </Shot>
  </ThemeProvider>
);

export default function App() {
  return (
    <Page>
      <GlobalStyle />
      <CornerArt viewBox="0 0 320 222" aria-hidden="true">
        <path d="M0 0h259L0 221z" fill="#c0cfea" />
        <path d="M0 0h320L0 136z" fill="#7c9ad6" />
        <path d="M0 0h259L197 53 0 136z" fill="#698dd0" />
        <path d="M0 0h180L0 221z" fill="#698dd0" />
        <path d="M0 0h180L105 92 0 136z" fill="#4472c4" />
      </CornerArt>
      <Frame>
        <PageHeader>32</PageHeader>
        <Heading $numbered><span>2.</span><span>Change structure</span></Heading>
        <Screen metrics={large} selected="PPOM_OLD - Change" />
        <Heading>3. Display structure</Heading>
        <Screen metrics={regular} selected="PPOS_OLD - Display" inset={98} />
        <PageFooter>32</PageFooter>
      </Frame>
    </Page>
  );
}
